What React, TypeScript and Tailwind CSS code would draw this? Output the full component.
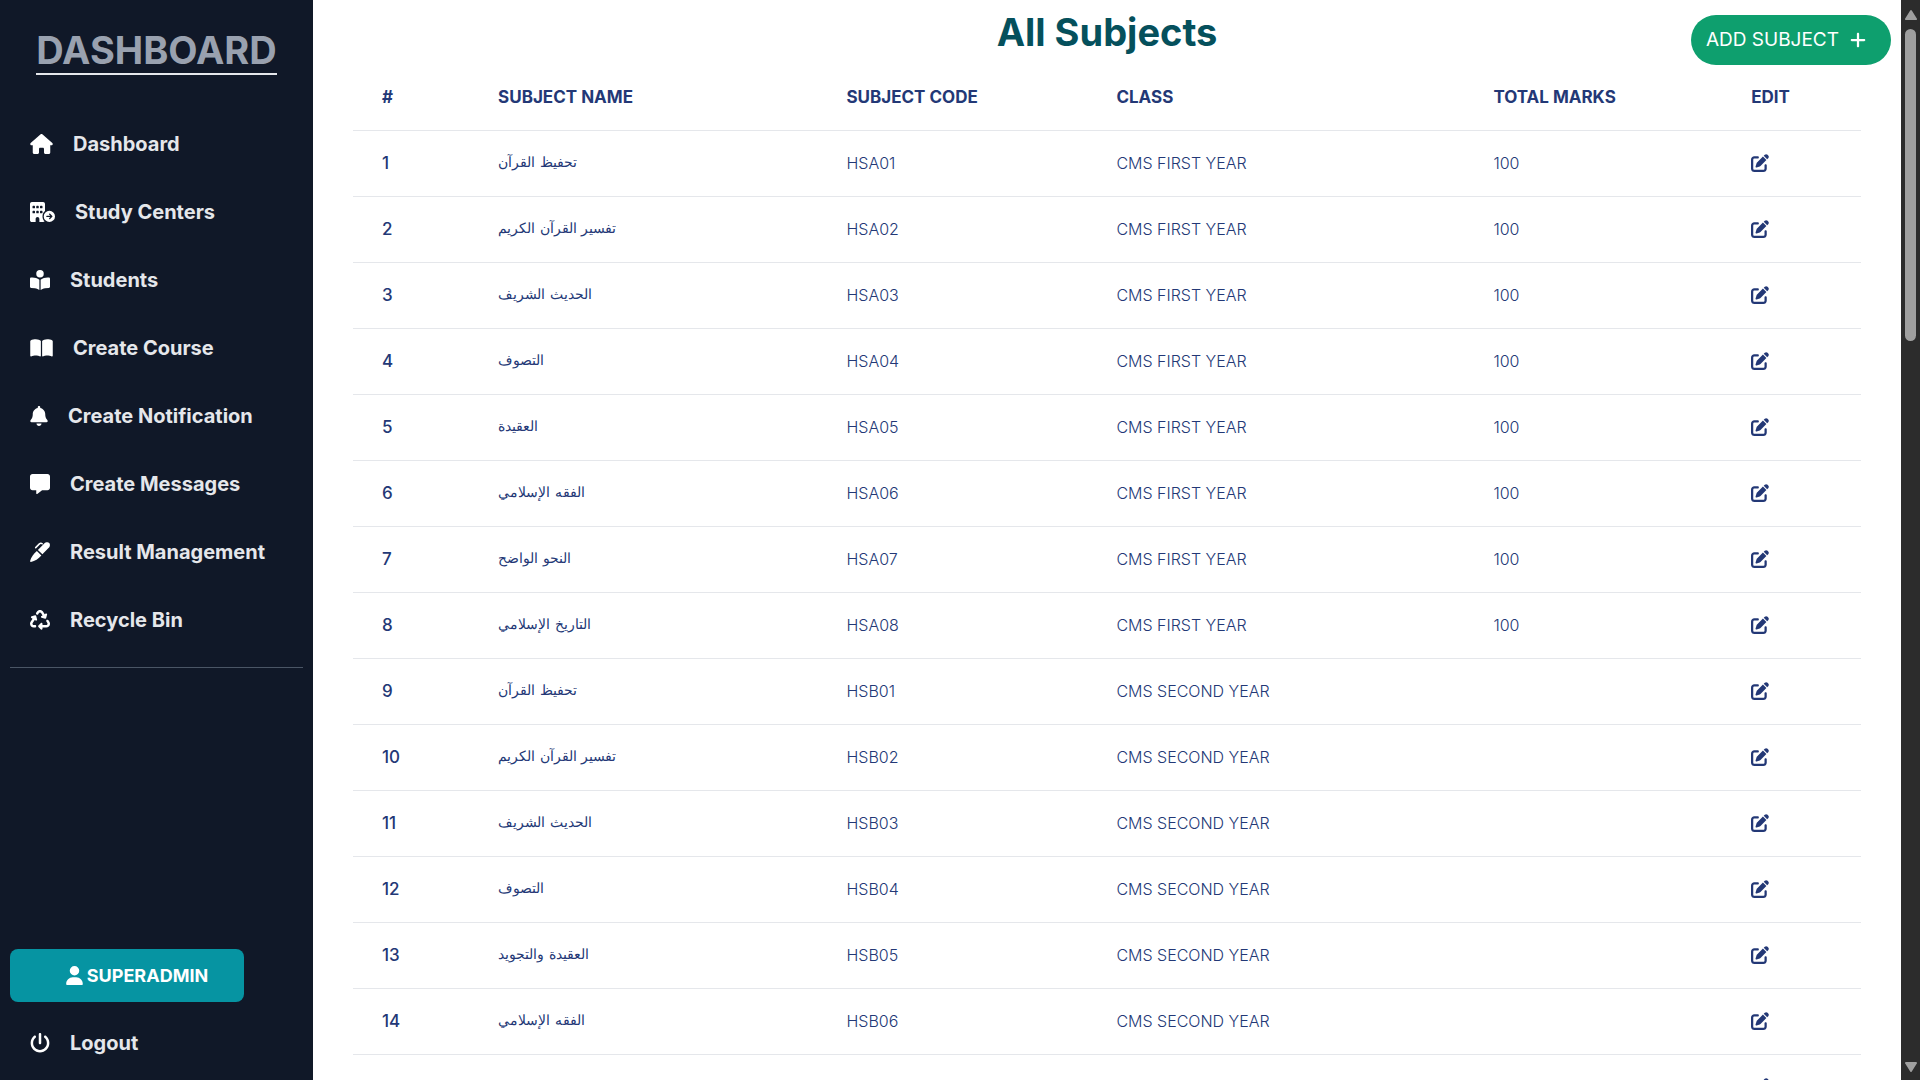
import type { ComponentType } from "react";
import {
  FaHouse, FaBuildingCircleArrowRight, FaBookOpenReader, FaBookOpen, FaBell, FaMessage,
  FaRecycle, FaUser, FaPowerOff, FaPenToSquare, FaPlus,
} from "react-icons/fa6";

type NavItem = { label: string; icon: ComponentType<{ className?: string }>; iconWidth?: string };

function PenIcon({ className }: { className?: string }) {
  return (
    <svg viewBox="0 0 20 20" className={className} fill="currentColor" aria-hidden="true">
      <path d="M7.9 7.9 14 1.8C15.6.2 18-.1 19.2 1c1.2 1.2.9 3.5-.7 5.1l-6.1 6.2z" />
      <path d="M6.9 8.9 11.4 13.4C8.4 16.7 4.9 19 .9 19.9.3 20 0 19.7.1 19.1 1 15.1 3.5 11.9 6.9 8.9z" />
      <path d="M5.7 5.6 9.4 1.9q1.4-1.3 2.8-.1" fill="none" stroke="currentColor" strokeWidth="1.5" strokeLinecap="round" />
    </svg>
  );
}

const navItems: NavItem[] = [
  { label: "Dashboard", icon: FaHouse, iconWidth: "w-[23px]" },
  { label: "Study Centers", icon: FaBuildingCircleArrowRight, iconWidth: "w-[25px]" },
  { label: "Students", icon: FaBookOpenReader },
  { label: "Create Course", icon: FaBookOpen, iconWidth: "w-[23px]" },
  { label: "Create Notification", icon: FaBell, iconWidth: "w-[18px]" },
  { label: "Create Messages", icon: FaMessage },
  { label: "Result Management", icon: PenIcon },
  { label: "Recycle Bin", icon: FaRecycle },
];

type Subject = { name: string; code: string; className: string; marks?: number };

const FIRST = "CMS FIRST YEAR";
const SECOND = "CMS SECOND YEAR";

const subjects: Subject[] = [
  { name: "تحفيظ القرآن", code: "HSA01", className: FIRST, marks: 100 },
  { name: "تفسير القرآن الكريم", code: "HSA02", className: FIRST, marks: 100 },
  { name: "الحديث الشريف", code: "HSA03", className: FIRST, marks: 100 },
  { name: "التصوف", code: "HSA04", className: FIRST, marks: 100 },
  { name: "العقيدة", code: "HSA05", className: FIRST, marks: 100 },
  { name: "الفقه الإسلامي", code: "HSA06", className: FIRST, marks: 100 },
  { name: "النحو الواضح", code: "HSA07", className: FIRST, marks: 100 },
  { name: "التاريخ الإسلامي", code: "HSA08", className: FIRST, marks: 100 },
  { name: "تحفيظ القرآن", code: "HSB01", className: SECOND },
  { name: "تفسير القرآن الكريم", code: "HSB02", className: SECOND },
  { name: "الحديث الشريف", code: "HSB03", className: SECOND },
  { name: "التصوف", code: "HSB04", className: SECOND },
  { name: "العقيدة والتجويد", code: "HSB05", className: SECOND },
  { name: "الفقه الإسلامي", code: "HSB06", className: SECOND },
  { name: "النحو الواضح", code: "HSB07", className: SECOND },
];

function NavLink({ label, icon: Icon, iconWidth = "w-5" }: NavItem) {
  return (
    <a href="#" className="flex h-12 items-center gap-5 rounded-lg px-5 text-xl font-bold whitespace-nowrap text-gray-200">
      <Icon className={`h-5 shrink-0 text-white ${iconWidth}`} />
      {label}
    </a>
  );
}

function Sidebar() {
  return (
    <aside className="flex w-[313px] shrink-0 flex-col bg-gray-900 px-2.5">
      <div className="mt-7 flex justify-center">
        <h2 className="border-b-2 border-gray-200 text-[38px] leading-[45px] font-bold text-gray-400">DASHBOARD</h2>
      </div>
      <nav className="mt-[45px] flex flex-col gap-5">
        {navItems.map((item) => (
          <NavLink key={item.label} {...item} />
        ))}
      </nav>
      <hr className="mt-[23px] border-gray-600" />
      <div className="mt-auto flex flex-col pb-[13px]">
        <button type="button" className="mb-[17px] flex h-[53px] w-[234px] items-center justify-center gap-1 rounded-lg bg-[#0694a2] pl-5 text-lg font-bold text-white">
          <FaUser className="h-[19px] w-[17px]" />
          SUPERADMIN
        </button>
        <NavLink label="Logout" icon={FaPowerOff} />
      </div>
    </aside>
  );
}

function SubjectsTable() {
  return (
    <table className="w-full table-fixed text-left text-base text-[#233876]">
      <colgroup>
        <col className="w-[7.7%]" />
        <col className="w-[23.1%]" />
        <col className="w-[17.9%]" />
        <col className="w-[25%]" />
        <col className="w-[17.1%]" />
        <col className="w-[9.2%]" />
      </colgroup>
      <thead>
        <tr className="h-[66px] border-b border-gray-200 text-[17px] font-bold">
          {["#", "SUBJECT NAME", "SUBJECT CODE", "CLASS", "TOTAL MARKS", "EDIT"].map((title) => (
            <th key={title} scope="col" className="px-[29px] pt-0.5">{title}</th>
          ))}
        </tr>
      </thead>
      <tbody>
        {subjects.map((subject, index) => (
          <tr key={subject.code} className="h-[66px] border-b border-gray-200 font-light">
            <th scope="row" className="px-[29px] pt-0.5 text-[17px] font-medium">{index + 1}</th>
            <td className="px-[29px] pb-0.5 font-['DejaVu_Sans',sans-serif] text-sm"><span lang="ar">{subject.name}</span></td>
            <td className="px-[29px]">{subject.code}</td>
            <td className="px-[29px]">{subject.className}</td>
            <td className="px-[29px]">{subject.marks}</td>
            <td className="px-[29px]">
              <button type="button" aria-label={`Edit ${subject.code}`} className="block">
                <FaPenToSquare className="size-[18px]" />
              </button>
            </td>
          </tr>
        ))}
      </tbody>
    </table>
  );
}

function ScrollRail() {
  return (
    <div aria-hidden="true" className="flex w-[19px] shrink-0 flex-col items-center bg-[#2c2c2c] pt-2.5 pb-2 text-[#9f9f9f]">
      <svg viewBox="0 0 12 10" className="h-2.5 w-3 fill-current"><path d="M5.2.6a1 1 0 0 1 1.6 0l5 7.8a1 1 0 0 1-.8 1.6H1a1 1 0 0 1-.8-1.6z" /></svg>
      <div className="mt-[9px] h-[312px] w-[11px] rounded-full bg-[#9f9f9f]" />
      <svg viewBox="0 0 12 10" className="mt-auto h-2.5 w-3 fill-current"><path d="M5.2 9.4a1 1 0 0 0 1.6 0l5-7.8A1 1 0 0 0 11 0H1a1 1 0 0 0-.8 1.6z" /></svg>
    </div>
  );
}

export default function App() {
  return (
    <div className="flex h-screen overflow-hidden bg-white font-['Inter',sans-serif]">
      <Sidebar />
      <main className="relative min-w-0 flex-1 overflow-hidden px-10">
        <h1 className="h-16 text-center text-[38px] leading-16 font-bold text-[#05505c]">All Subjects</h1>
        <button type="button" className="absolute top-[15px] right-2.5 flex h-[50px] items-center gap-2.5 rounded-full bg-[#0e9f6e] pr-6 pl-[15px] text-[19px] text-white">
          ADD SUBJECT
          <FaPlus className="size-[18px]" />
        </button>
        <SubjectsTable />
      </main>
      <ScrollRail />
    </div>
  );
}
